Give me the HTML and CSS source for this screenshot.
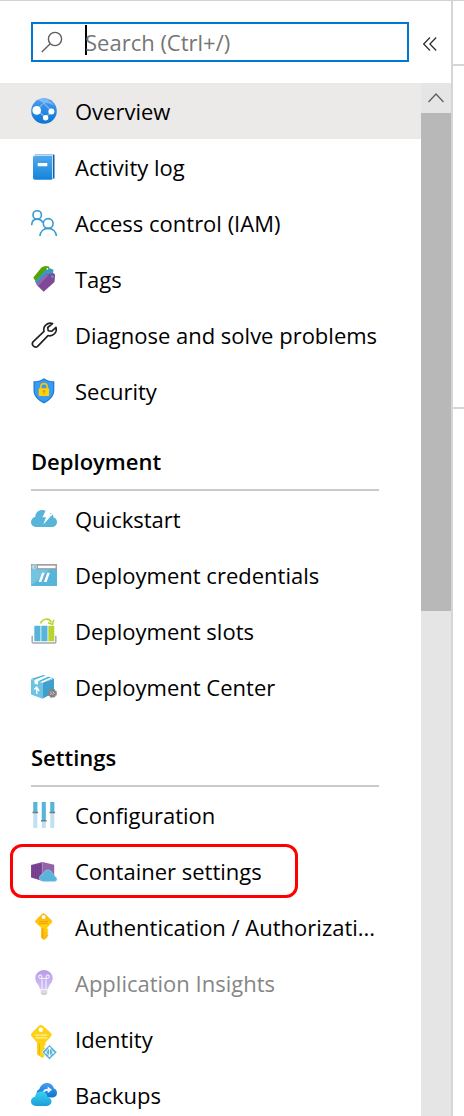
FILE: index.html
```html
<!DOCTYPE html>
<html lang="en">
<head>
<meta charset="utf-8">
<meta name="viewport" content="width=device-width, initial-scale=1">
<title>App Service menu</title>
<link rel="stylesheet" href="styles.css">
</head>
<body>
<svg class="defs" aria-hidden="true">
  <defs>
    <linearGradient id="blue" x1="0" y1="0" x2="0" y2="1"><stop offset="0" stop-color="#4a9df0"/><stop offset="1" stop-color="#0b74d1"/></linearGradient>
    <linearGradient id="book" x1="0" y1="0" x2="0" y2="1"><stop offset="0" stop-color="#50a9ef"/><stop offset="1" stop-color="#1683d8"/></linearGradient>
    <linearGradient id="gold" x1="0" y1="0" x2="0" y2="1"><stop offset="0" stop-color="#fdaf0b"/><stop offset=".5" stop-color="#ffd20f"/><stop offset="1" stop-color="#fdb30b"/></linearGradient>
    <linearGradient id="bulb" x1="0" y1="0" x2="0" y2="1"><stop offset="0" stop-color="#b79bea"/><stop offset="1" stop-color="#d3c2f5"/></linearGradient>
    <linearGradient id="aqua" x1="0" y1="0" x2="0" y2="1"><stop offset="0" stop-color="#35d3f2"/><stop offset="1" stop-color="#1c9ed6"/></linearGradient>
  </defs>
</svg>
<div class="page">
  <aside class="sidebar">
    <header class="toolbar">
      <label class="search">
        <svg class="search-icon" viewBox="0 0 22 22" aria-hidden="true"><circle cx="14" cy="8" r="6.6"/><path d="M9.2 12.8 .8 21"/></svg>
        <span class="caret"></span>
        <input class="search-input" type="text" placeholder="Search (Ctrl+/)" aria-label="Search (Ctrl+/)">
      </label>
      <button class="collapse" type="button" aria-label="Collapse menu">
        <svg viewBox="0 0 14 14" aria-hidden="true"><path d="M7 .5.7 7 7 13.5M13.2.5 6.9 7l6.3 6.5"/></svg>
      </button>
    </header>
    <div class="body">
      <nav class="menu">
        <ul class="list">
          <li><a class="item active" href="#overview">
            <svg class="icon" viewBox="0 0 26 26"><circle cx="13" cy="13" r="12.8" fill="url(#blue)"/><path d="M17.500 1.200 6 11M9.500 1.500l10.500 11M6 12l8.500 7.500M20.500 13.500l-6 6" fill="none" stroke="#7ab8f5" stroke-width="1.100"/><path d="M6.500 2.200c3.500-2 8-1.700 11.500.3 2 1.200 4 3 5.200 5-6-3-11-2.800-16.700-5.300Z" fill="#8dc3f7" opacity=".7"/><circle cx="5.700" cy="12.400" r="4.300" fill="#fff"/><circle cx="20.400" cy="13.400" r="3" fill="#fff"/><circle cx="14.600" cy="19.700" r="2.700" fill="#fff"/></svg>
            <span class="label">Overview</span></a></li>
          <li><a class="item" href="#activity">
            <svg class="icon" viewBox="0 0 26 26"><path d="M4 .5h18.500a1 1 0 0 1 1 1v23H4Z" fill="#0c5ea8"/><path d="M4 1h17.800v23H4Z" fill="#fff"/><path d="M2 3c0-1 .6-1.600 1.600-1.600H21V25.800H4A2 2 0 0 1 2 24Z" fill="url(#book)"/><path d="M3 2.600C4 1.400 5 1 6 1h16" fill="none" stroke="#d6ecfc" stroke-width=".8"/><rect x="6.700" y="9" width="9.600" height="3.300" rx=".4" fill="#fff"/></svg>
            <span class="label">Activity log</span></a></li>
          <li><a class="item" href="#access">
            <svg class="icon" viewBox="0 0 26 26"><g fill="none" stroke="#379bd0" stroke-width="1.600"><circle cx="6.200" cy="4.900" r="4.200"/><path d="M.7 15.300c0-4 2.300-6.200 5.500-6.200 2.600 0 4.500 1.200 5.500 3.500"/><circle cx="17.200" cy="13.500" r="4.900"/><path d="M8.900 26c.4-4.500 3.700-7.600 8.300-7.600s7.700 3.100 8.200 7.600"/></g></svg>
            <span class="label">Access control (IAM)</span></a></li>
          <li><a class="item" href="#tags">
            <svg class="icon" viewBox="0 0 26 26"><path d="M2.300 11.500 10.500 1.500 14 0l4 .5 1.500 5L5 16Z" fill="#57a300"/><path d="M4 15.500 14.500 4l5-1.500 3 1.200-1 6L6 19Z" fill="#3999c6"/><path d="M5.500 17.500 15 8.500l7.500-1.500 1.600 1.700-.6 7.300L12.700 25.800l-6-5.800Z" fill="#804998"/><path d="m5.500 18 9.500-9 3-.5-11 11.500Z" fill="#9a6aaf"/><circle cx="21.300" cy="10.600" r="1.200" fill="#41b0e5"/><circle cx="16.300" cy="2.800" r=".9" fill="#fff"/></svg>
            <span class="label">Tags</span></a></li>
          <li><a class="item" href="#diagnose">
            <svg class="icon" viewBox="0 0 26 26"><path d="M21.600 1.600A6.500 6.500 0 0 0 13 9.300L2 19.800a3.300 3.300 0 0 0 4.600 4.600L17 13.600a6.600 6.600 0 0 0 8-8.300l-4.400 4-3.400-.6-.5-3.200Z" fill="none" stroke="#1f1f1f" stroke-width="1.600" stroke-linejoin="round"/></svg>
            <span class="label">Diagnose and solve problems</span></a></li>
          <li><a class="item" href="#security">
            <svg class="icon" viewBox="0 0 26 26"><path d="M13 .3c3.500 2.500 6.500 3 10.300 3v9c0 6-4.500 10-10.300 13.200C7 22.300 2.500 18.300 2.500 12.300v-9c3.800 0 7-.5 10.500-3Z" fill="#1778d2"/><path d="M13 1.600c3 2 6 2.700 9.200 2.800v8c0 5.200-4 8.800-9.200 11.700-5.300-2.900-9.400-6.500-9.400-11.700v-8c3.200-.1 6.400-.8 9.400-2.800Z" fill="#399af0"/><path d="M9.800 11V8.800c0-4.200 6.400-4.200 6.400 0V11" fill="none" stroke="#f5c40f" stroke-width="1.600"/><rect x="7.700" y="10.300" width="10.400" height="7.600" rx=".7" fill="#ffd00d"/><circle cx="13" cy="13.300" r="1.200" fill="#e99b06"/><path d="M12.500 13.500h1v3h-1Z" fill="#e99b06"/></svg>
            <span class="label">Security</span></a></li>
        </ul>

        <h2 class="heading">Deployment</h2>
        <ul class="list">
          <li><a class="item" href="#quickstart">
            <svg class="icon" viewBox="0 0 26 26"><path d="M5.500 21C2 21 0 18.800 0 16c0-2.700 1.800-4.600 4.200-5C4.500 6.600 7.500 4 11.300 4c2.300 0 4.200 1 5.500 2.800 3.400-.5 5.600 1.600 5.700 4.700 2.200.5 3.500 2.200 3.500 4.500 0 2.800-2 5-5 5Z" fill="#59b4d9"/><path d="M15.500 2.800h6.300l-3 5h3.400L12.300 18.500l2.700-7.200h-3.500Z" fill="#fff"/></svg>
            <span class="label">Quickstart</span></a></li>
          <li><a class="item" href="#credentials">
            <svg class="icon" viewBox="0 0 26 26"><rect y="2" width="26" height="22" rx=".6" fill="#59b4d9"/><path d="M0 2h26v5.600H0Z" fill="#a0a1a2"/><path d="M0 7.600h19L0 24Z" fill="#74c3e1"/><circle cx="3.300" cy="4.900" r="2.200" fill="#59b4d9" stroke="#fff" stroke-width=".6"/><path d="M4.700 4.900H2m1-1-1 1 1 1" fill="none" stroke="#fff" stroke-width=".6"/><rect x="7" y="3.700" width="17.500" height="2.400" fill="#fff"/><path d="M11 10.800h2.700L10.400 20H7.700ZM16.200 10.800h2.700L15.600 20h-2.700Z" fill="#fff"/></svg>
            <span class="label">Deployment credentials</span></a></li>
          <li><a class="item" href="#slots">
            <svg class="icon" viewBox="0 0 26 26"><path d="M1.200 17.700V24q0 1 1 1h21.600q1 0 1-1v-6.300" fill="none" stroke="#a7a8a9" stroke-width="1.500"/><path d="M3.300 7.800h6.200v15.500H3.300ZM10.300 7.800h6.200v15.500h-6.200Z" fill="#59b4d9"/><path d="M17.300 7.800h6v15.500h-6Z" fill="#b8d432"/><path d="M9.500 5.500C11.500.3 18.500-.3 20.300 4.500" fill="none" stroke="#b8d432" stroke-width="1.700"/><path d="m22.700 1.700-1.200 4.700-4.500-1.600" fill="none" stroke="#b8d432" stroke-width="1.500"/></svg>
            <span class="label">Deployment slots</span></a></li>
          <li><a class="item" href="#center">
            <svg class="icon" viewBox="0 0 26 26"><path d="m0 5.200 11.500 3.600V24.800L0 20.500Z" fill="#6cc3e4"/><path d="m11.500 8.800 11.500-4v13.700l-11.500 6.300Z" fill="#3f9fcd"/><path d="m0 5 12.500-4 10.500 3.500-11.500 4.300Z" fill="#4fb1d9"/><path d="m3.500 5.700 11.200-4.200 2.800.9L7 7.300v3.500l-3.500-1.200ZM9 8l10.500-4.500 2 .7L11.500 8.800Z" fill="#fff"/><path d="M5.700 20v-6m-2.500 1.400 2.500-2.200 2.400 4" fill="none" stroke="#fff" stroke-width="1.400"/><circle cx="21.400" cy="19.300" r="3.900" fill="#858585" stroke="#858585" stroke-width="1.300" stroke-dasharray="2 1.060"/><path d="m19 17.700 1.600 1.600-1.600 1.600m2.600-3.200 1.600 1.600-1.600 1.600" fill="none" stroke="#ddd" stroke-width=".8"/></svg>
            <span class="label">Deployment Center</span></a></li>
        </ul>

        <h2 class="heading">Settings</h2>
        <ul class="list">
          <li><a class="item" href="#configuration">
            <svg class="icon" viewBox="0 0 26 26"><path d="M2.300 0h4v26h-4ZM10.800 0h4v26h-4ZM19.300 0h4v26h-4Z" fill="#bfe1f1"/><path d="M2.300 0h4v10h-4ZM10.800 0h4v18h-4ZM19.300 0h4v10h-4Z" fill="#59b4d9"/><path d="M1.500 9.700h5.600v1.600H1.500ZM10 17.900h5.600v1.600H10ZM18.500 9.700h5.600v1.600h-5.600Z" fill="#7a7a7a"/></svg>
            <span class="label">Configuration</span></a></li>
          <li class="marked"><a class="item" href="#container">
            <svg class="icon" viewBox="0 0 26 26"><path d="m0 7 11.500-3v19L0 19.500Z" fill="#804998"/><path d="m11.500 4 11.700 2.700v13L11.500 23Z" fill="#9363a8"/><path d="M2.200 7.500v12M4.500 7v13M6.800 6.500v14M9.100 6v15" stroke="#66347f" stroke-width=".8"/><path d="M12.500 23.400c-5.500-.2-5.300-7-.3-7.200 1.100-5.600 8.300-5.700 9.300-.2 1.800.5 2.200 1.400 2.400 2.400 2.900 1 2.700 5-.4 5Z" fill="#59b4d9" stroke="#b6dded" stroke-width=".5"/></svg>
            <span class="label">Container settings</span></a></li>
          <li><a class="item" href="#auth">
            <svg class="icon" viewBox="0 0 26 26"><path d="M11 0q1.500-1.400 3 0l6.700 6.200q1.200 1.300 0 2.600L16.300 13.500V15l1.200 1.200-1.200 1.300 1.200 1.200-1.200 1.300 1.200 1.300-1.200 1.500v.8L12.700 26l-2.700-2.300V13.500L4.600 8.800q-1.200-1.300 0-2.600Z" fill="url(#gold)"/><circle cx="12.600" cy="3.100" r="2" fill="#fff"/><path d="M8 7.600h9M8 9.600h9M11.700 14v9" stroke="#ee9d08" stroke-width=".9"/></svg>
            <span class="label">Authentication / Authorizati...</span></a></li>
          <li><a class="item disabled" href="#insights">
            <svg class="icon" viewBox="0 0 26 26"><path d="M13 0c5 0 8.700 3.700 8.700 8.300 0 4.700-3.900 6-4.600 10.900H8.900C8.200 14.300 4.300 13 4.300 8.300 4.300 3.700 8 0 13 0Z" fill="url(#bulb)"/><path d="M11 19v-9.500M15 19v-9.500M11 8.500c-4 .6-4-3.500-1.700-3.500 1.700 0 1.700 1.600 1.700 3.500h4c0-1.900 0-3.500 1.700-3.500 2.300 0 2.300 4.100-1.700 3.500" fill="none" stroke="#f5effd" stroke-width="1.100"/><path d="M9.800 20.300h6.400v3L14.700 25h-3.400l-1.500-1.700Z" fill="#cfcfcf"/><path d="M9.800 22h6.400" stroke="#f2f2f2" stroke-width=".8"/></svg>
            <span class="label">Application Insights</span></a></li>
          <li><a class="item" href="#identity">
            <svg class="icon" viewBox="0 0 26 26"><path d="M7.900-.2q2-1.400 4 0l8 7.200q1.500 1.500.3 3.200L14.500 16.500V19l-1.800 1.700 1.800 1.700-1.800 2 1.800 2-1.800 2.100 1 1.500-2.500 2L6 28.500v-12L.5 10.200Q-.6 8.500.7 7Z" fill="#fcd116"/><circle cx="9.900" cy="3.800" r="2.200" fill="#fff"/><path d="M4.300 9.200h12M4.300 11.800h12" stroke="#fff0a0" stroke-width="1.300"/><path d="M8.300 17.500v11" stroke="#e5b400" stroke-width="1"/><path d="m18.500 18.700 7.600 7.500-7.600 7.600-7.600-7.600Z" fill="#59b4d9" stroke="#fff" stroke-width=".7"/><path d="m18.500 21.600-3.900 5 3.900 3.200 3.900-3.200ZM18.500 21.600V30" fill="none" stroke="#fff" stroke-width=".8"/><circle cx="18.500" cy="22" r="1.100" fill="#fff"/><circle cx="14.700" cy="26.500" r="1" fill="#fff"/><circle cx="22.300" cy="26.500" r="1" fill="#fff"/><circle cx="18.500" cy="30" r="1.100" fill="#fff"/></svg>
            <span class="label">Identity</span></a></li>
          <li><a class="item" href="#backups">
            <svg class="icon" viewBox="0 0 26 26"><path d="M11 15c-4 0-6.500-2-5-5.500.5-1.500 1.600-2 2.300-2.300C9.500 3 12.800 1 16 1c3.800 0 6.200 2.400 6.800 5.500 2 .5 3.200 2 3.200 4.500 0 2.800-2 4.500-5 4.500Z" fill="url(#blue)"/><path d="M11.800 11c0-3 2-4.300 4.900-4.300V4.500L21 7.800l-4.300 3.400V9.100c-1.900 0-3.200.5-4.900 1.900Z" fill="#e8f3fd"/><path d="M5.200 24C2 24 0 22 0 19.300c0-2.500 1.700-4.300 4-4.600C4.500 11.500 7 9.600 10.200 9.600c3.300 0 6 2 6.300 5.300 2.300.3 4 2 4 4.400 0 2.700-2 4.700-4.800 4.700Z" fill="url(#aqua)"/></svg>
            <span class="label">Backups</span></a></li>
        </ul>
      </nav>
      <div class="scrollbar">
        <button class="scroll-up" type="button" aria-label="Scroll up">
          <svg viewBox="0 0 16 10" aria-hidden="true"><path d="m.5 9 7.500-8 7.500 8"/></svg>
        </button>
        <div class="track"><div class="thumb"></div></div>
      </div>
    </div>
  </aside>
  <main class="content">
    <div class="pane pane-bar"></div>
    <div class="pane pane-summary"></div>
  </main>
</div>
</body>
</html>
```
FILE: styles.css
```css
*,
*::after {
  box-sizing: border-box;
}

body {
  margin: 0;
  background: #fff;
  color: #000;
  font: 22px/30px "Open Sans", "Noto Sans", sans-serif;
}

.defs {
  position: absolute;
  width: 0;
  height: 0;
}

.page {
  display: flex;
  height: 100vh;
  overflow: hidden;
  border-top: 1px solid #d2d2d2;
}

.sidebar {
  display: flex;
  flex: 1;
  flex-direction: column;
  min-width: 0;
  border-right: 2px solid #d6d6d6;
}

.toolbar {
  display: flex;
  flex: none;
  align-items: center;
  gap: 14px;
  height: 82px;
  padding: 0 14px 0 31px;
}

.search {
  display: flex;
  flex: 1;
  align-items: center;
  min-width: 0;
  height: 40px;
  padding-left: 8px;
  border: 2px solid #0078d4;
}

.search-icon {
  flex: none;
  width: 22px;
  height: 22px;
  margin-right: 22px;
  fill: none;
  stroke: #605e5c;
  stroke-width: 1.4;
}

.caret {
  flex: none;
  width: 2px;
  height: 30px;
  margin: 0 -2px 4px 0;
  background: #000;
}

.search-input {
  flex: 1;
  min-width: 0;
  padding: 0;
  border: 0;
  outline: 0;
  background: none;
  color: #000;
  font: inherit;
}

.search-input::placeholder {
  color: #767676;
  opacity: 1;
}

.collapse {
  display: flex;
  flex: none;
  padding: 0;
  margin-top: 4px;
  border: 0;
  background: none;
}

.collapse svg {
  width: 14px;
  height: 14px;
  fill: none;
  stroke: #323130;
  stroke-width: 1.3;
}

.body {
  display: flex;
  flex: 1;
  min-height: 0;
}

.menu {
  flex: 1;
  min-width: 0;
  overflow: hidden;
}

.list {
  margin: 0;
  padding: 0;
  list-style: none;
}

.item {
  display: flex;
  align-items: center;
  gap: 18px;
  height: 56px;
  padding: 0 42px 0 31px;
  color: #000;
  text-decoration: none;
}

.active {
  background: #ebeae9;
}

.disabled {
  color: #868686;
}

.icon {
  flex: none;
  width: 26px;
  height: 26px;
  overflow: visible;
}

.label {
  white-space: nowrap;
}

.heading {
  display: flex;
  align-items: center;
  height: 72px;
  margin: 0 42px 0 31px;
  padding-top: 14px;
  border-bottom: 2px solid #cacaca;
  font-size: 22px;
  font-weight: 600;
}

.marked {
  position: relative;
}

.marked::after {
  position: absolute;
  top: 1px;
  bottom: 1px;
  left: 10px;
  width: 288px;
  border: 3px solid #f00;
  border-radius: 12px;
  content: "";
  pointer-events: none;
}

.scrollbar {
  display: flex;
  flex: none;
  flex-direction: column;
  width: 30px;
  background: #e5e5e5;
}

.scroll-up {
  display: flex;
  flex: none;
  align-items: center;
  justify-content: center;
  height: 30px;
  padding: 0;
  border: 0;
  background: none;
}

.scroll-up svg {
  width: 16px;
  height: 10px;
  fill: none;
  stroke: #606060;
  stroke-width: 1.3;
}

.track {
  flex: 1;
}

.thumb {
  height: 49.7%;
  background: #b8b8b8;
}

.content {
  flex: none;
  width: 11px;
}

.pane {
  border-bottom: 2px solid #d6d6d6;
}

.pane-bar {
  height: 65px;
}

.pane-summary {
  height: 343px;
}
```
